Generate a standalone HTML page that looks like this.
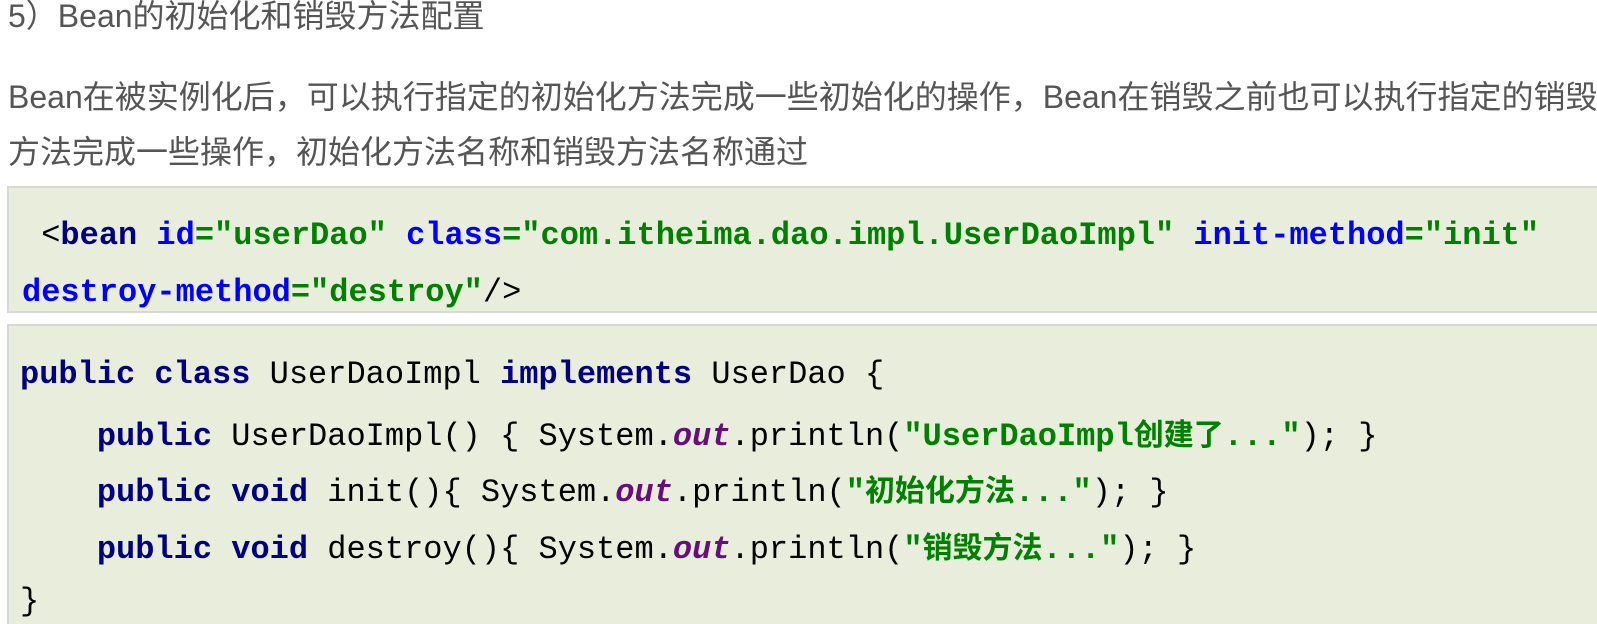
<!DOCTYPE html>
<html><head><meta charset="utf-8"><style>
html,body{margin:0;padding:0;background:#fff;width:1597px;height:624px;overflow:hidden;position:relative}
.t{position:absolute;left:8px;white-space:nowrap;color:#555;font-family:"Liberation Sans","Noto Sans CJK SC",sans-serif}
.box{position:absolute;left:7px;width:1600px;background:#e9eddc;border:2px solid #d8d8d8;box-sizing:border-box}
.c{position:absolute;white-space:pre;font-family:"Liberation Mono","Noto Sans CJK SC",monospace;font-size:32px;line-height:40px;color:#000}
.k{color:#000080;font-weight:bold}.a{color:#0000ff;font-weight:bold}.s{color:#008000;font-weight:bold}.o{color:#660e7a;font-weight:bold;font-style:italic}
.s .z{font-family:"Noto Sans CJK SC",sans-serif;font-size:30px}
</style></head><body>
<div class="t" style="top:-4px;font-size:32px;line-height:40px">5）Bean的初始化和销毁方法配置</div>
<div class="t" style="top:76px;font-size:32px;line-height:42px">Bean在被实例化后，可以执行指定的初始化方法完成一些初始化的操作，Bean在销毁之前也可以执行指定的销毁</div>
<div class="t" style="top:131px;font-size:32px;line-height:42px">方法完成一些操作，初始化方法名称和销毁方法名称通过</div>
<div class="box" style="top:186px;height:127px"></div>
<div class="box" style="top:324px;height:310px"></div>
<div class="c" style="left:22px;top:216px"> &lt;<span class="k">bean</span> <span class="a">id</span><span class="s">="userDao"</span> <span class="a">class</span><span class="s">="com.itheima.dao.impl.UserDaoImpl"</span> <span class="a">init-method</span><span class="s">="init"</span></div>
<div class="c" style="left:22px;top:273px"><span class="a">destroy-method</span><span class="s">="destroy"</span>/&gt;</div>
<div class="c" style="left:20px;top:355px"><span class="k">public class</span> UserDaoImpl <span class="k">implements</span> UserDao {</div>
<div class="c" style="left:20px;top:412px">    <span class="k">public</span> UserDaoImpl() { System.<span class="o">out</span>.println(<span class="s">"UserDaoImpl<span class="z">创建了</span>..."</span>); }</div>
<div class="c" style="left:20px;top:468px">    <span class="k">public void</span> init(){ System.<span class="o">out</span>.println(<span class="s">"<span class="z">初始化方法</span>..."</span>); }</div>
<div class="c" style="left:20px;top:525px">    <span class="k">public void</span> destroy(){ System.<span class="o">out</span>.println(<span class="s">"<span class="z">销毁方法</span>..."</span>); }</div>
<div class="c" style="left:20px;top:582px">}</div>
</body></html>
